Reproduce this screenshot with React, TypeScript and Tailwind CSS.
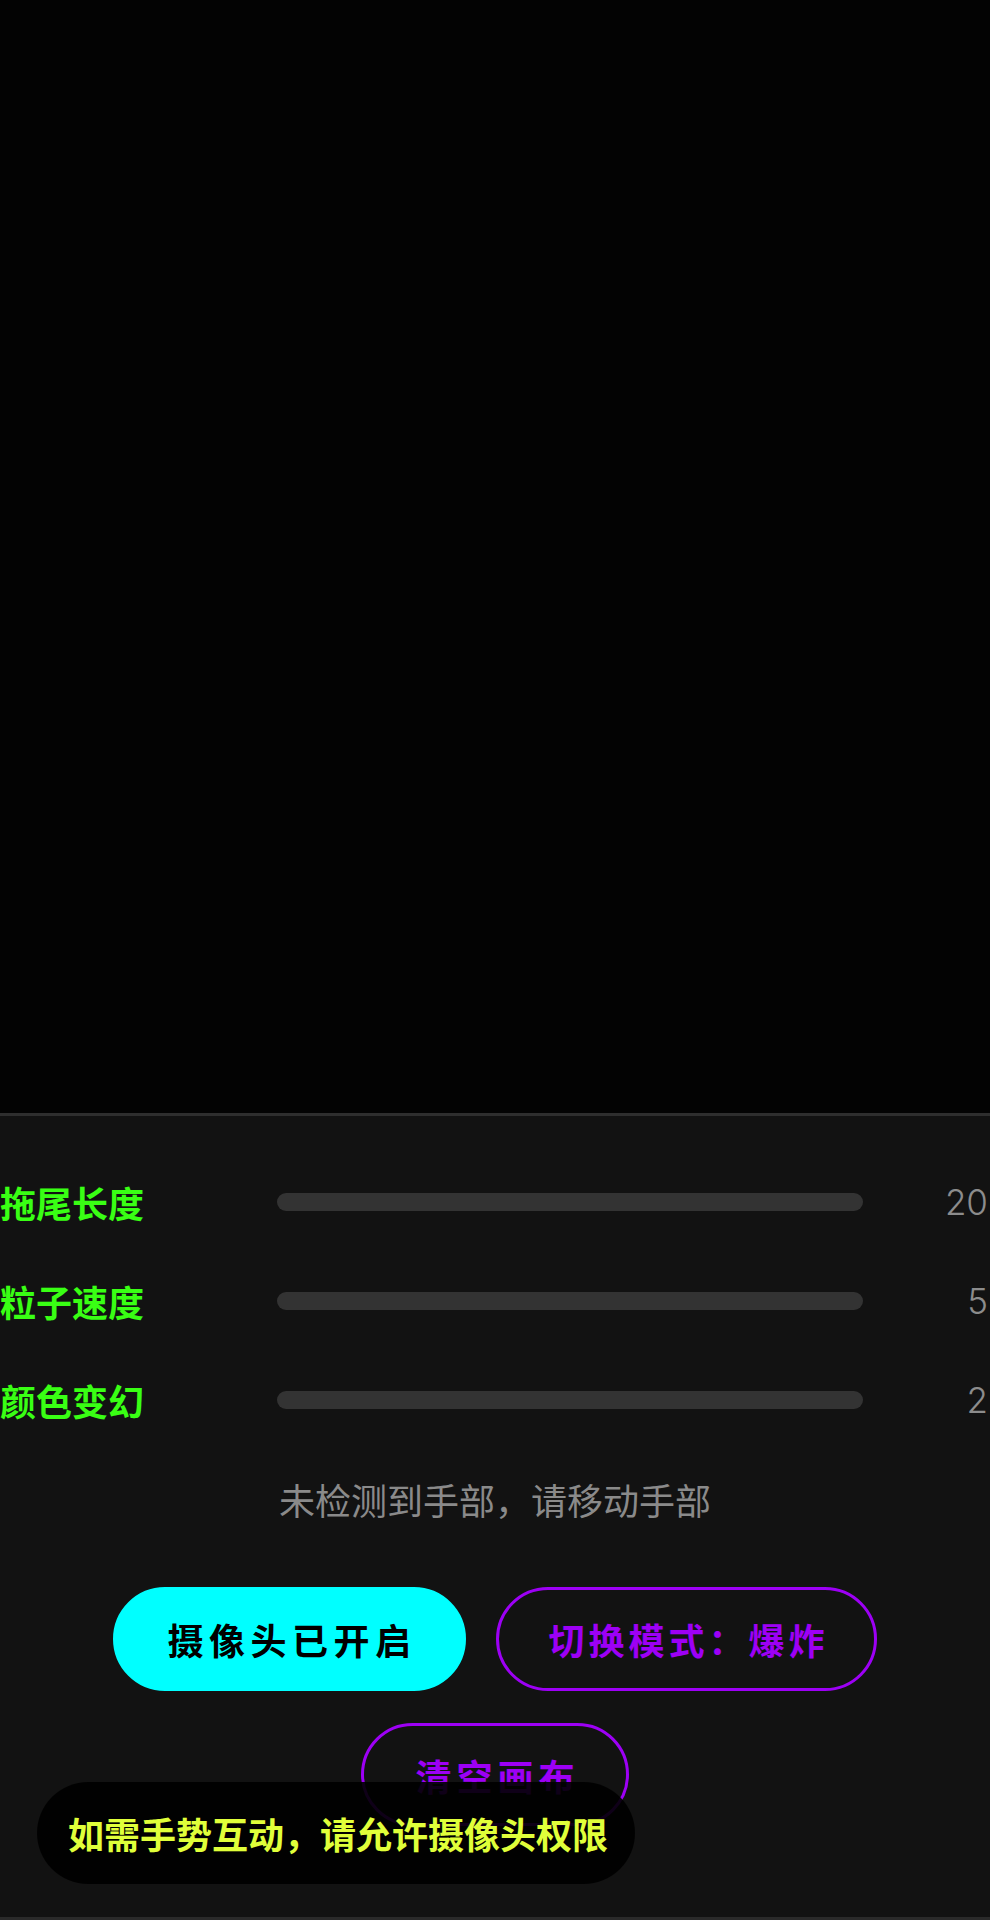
import React from 'react';

const cjk = { fontFamily: '"Noto Sans CJK SC", "Noto Sans", sans-serif' };

const sliders = [
  { label: '拖尾长度', value: 20 },
  { label: '粒子速度', value: 5 },
  { label: '颜色变幻', value: 2 },
];

function SliderRow({ label, value }: { label: string; value: number }) {
  return (
    <div className="flex h-[60px] items-center">
      <div
        className="w-[277px] shrink-0 text-[36px] font-bold leading-none text-[#39ff14]"
        style={cjk}
      >
        {label}
      </div>
      <div className="h-[18px] w-[586px] shrink-0 rounded-full bg-[#333333]" />
      <div
        className="flex-1 pr-[2px] text-right text-[35px] font-light leading-none text-[#8c8c8c]"
        style={{ fontFamily: 'Inter, "Liberation Sans", sans-serif' }}
      >
        {value}
      </div>
    </div>
  );
}

export default function App() {
  return (
    <div className="relative h-[1920px] w-full overflow-hidden bg-[#121212]" style={cjk}>
      {/* canvas area */}
      <div className="h-[1113px] bg-[#030303]" />

      {/* controls panel */}
      <div className="border-t-[3px] border-[#2e2e2e] bg-[#121212] pt-[56px]">
        <div className="flex flex-col gap-[39px]">
          {sliders.map((s) => (
            <SliderRow key={s.label} label={s.label} value={s.value} />
          ))}
        </div>

        <div className="mt-[44px] text-center text-[36px] leading-[50px] text-[#8a8a8a]">
          未检测到手部，请移动手部
        </div>

        <div className="mt-[63px] flex flex-wrap justify-center gap-x-[30px] gap-y-[32px]">
          <button className="flex h-[104px] w-[353px] items-center justify-center rounded-full border-[3px] border-[#00ffff] bg-[#00ffff] pl-[5px] text-[36px] font-bold tracking-[5.5px] text-black">
            摄像头已开启
          </button>
          <button className="flex h-[104px] w-[381px] items-center justify-center rounded-full border-[3px] border-[#9d00f5] bg-transparent pl-[4px] text-[36px] font-bold tracking-[4px] text-[#9d00f5]">
            切换模式：爆炸
          </button>
          <button className="flex h-[103px] w-[268px] items-center justify-center rounded-full border-[3px] border-[#9d00f5] bg-transparent pl-[5px] text-[36px] font-bold tracking-[5px] text-[#9d00f5]">
            清空画布
          </button>
        </div>
      </div>

      {/* toast */}
      <div className="absolute left-[37px] top-[1782px] flex h-[102px] w-[598px] items-center rounded-full bg-black/90 pl-[31px] text-[36px] font-bold text-[#e0ff3a]">
        如需手势互动，请允许摄像头权限
      </div>

      <div className="absolute bottom-0 left-0 h-[3px] w-full bg-[#2a2a2a]" />
    </div>
  );
}
